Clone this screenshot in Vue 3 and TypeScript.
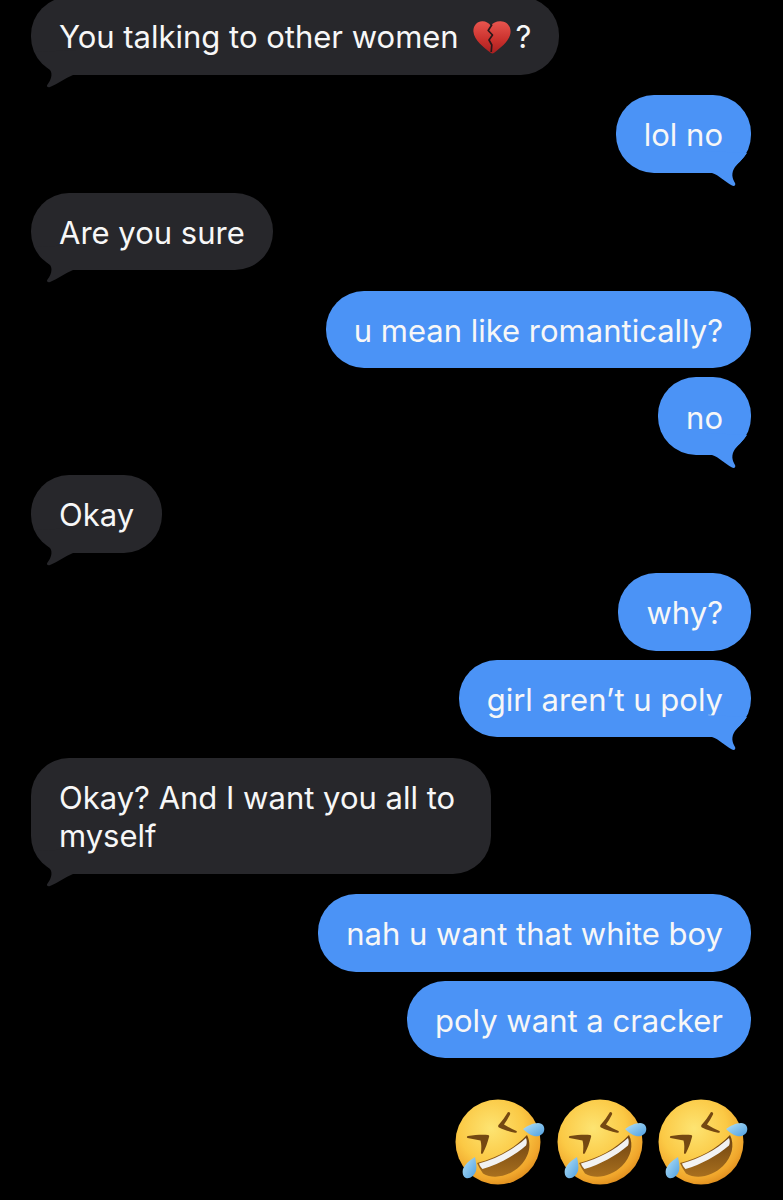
<script setup lang="ts">
interface Message {
  id: number
  text: string
  mine: boolean
  tail: boolean
  close?: boolean
  heart?: boolean
}

const messages: Message[] = [
  { id: 1, text: 'You talking to other women ', mine: false, tail: true, heart: true },
  { id: 2, text: 'lol no', mine: true, tail: true },
  { id: 3, text: 'Are you sure', mine: false, tail: true },
  { id: 4, text: 'u mean like romantically?', mine: true, tail: false },
  { id: 5, text: 'no', mine: true, tail: true, close: true },
  { id: 6, text: 'Okay', mine: false, tail: true },
  { id: 7, text: 'why?', mine: true, tail: false },
  { id: 8, text: 'girl aren’t u poly', mine: true, tail: true, close: true },
  { id: 9, text: 'Okay? And I want you all to myself', mine: false, tail: true },
  { id: 10, text: 'nah u want that white boy', mine: true, tail: false },
  { id: 11, text: 'poly want a cracker', mine: true, tail: false, close: true },
]

const emojis = [1, 2, 3]
</script>

<template>
  <div class="thread">
    <div
      v-for="m in messages"
      :key="m.id"
      class="bubble"
      :class="{ mine: m.mine, close: m.close }"
    >
      <span>{{ m.text }}</span>
      <template v-if="m.heart">
        <svg class="heart" viewBox="0 0 38 33" aria-hidden="true">
          <defs>
            <linearGradient id="heartFill" x1="0" y1="0" x2="0" y2="1">
              <stop offset="0" stop-color="#e8554e" />
              <stop offset="0.6" stop-color="#c9302c" />
              <stop offset="1" stop-color="#a81f20" />
            </linearGradient>
          </defs>
          <path
            d="M17.6 31.8C11 26.5 1 19.5.4 10.6.1 4.6 4.2.4 9.2.3c3.6-.1 6.4 1.5 8.6 4.4C20.1 2 23 .2 27.6.3c5.6.1 10 4.3 10 10.2 0 8.6-9.6 15.9-16.4 21.3-1.2 1-2.400 1-3.6 0z"
            fill="url(#heartFill)"
          />
          <path
            d="M19 3.500l-3.800 6 4.300 4.500-3.500 5 2.800 5-.6 7"
            fill="none"
            stroke="#27181a"
            stroke-width="1.700"
            stroke-linejoin="round"
          />
        </svg>
        <span>?</span>
      </template>
      <svg v-if="m.tail && m.mine" class="tail tail-right" viewBox="0 0 46 36" aria-hidden="true">
        <path d="M0 22L7 22C14 24 20 31 27 34.500C29.500 35.700 31 34 30 32C27 27 26 22 30 16C33 12 38 8 42 2L0 0Z" />
      </svg>
      <svg v-if="m.tail && !m.mine" class="tail tail-left" viewBox="0 0 46 38" aria-hidden="true">
        <path d="M4 2C8 10 14 15 19 20C22 24 20 30 16.500 34.500C15 36.500 17 38 19 37C27 34 34 28 42 25L46 25L46 0Z" />
      </svg>
    </div>

    <div class="emoji-row">
      <svg v-for="n in emojis" :key="n" class="laugh" viewBox="2 2 96 96" aria-hidden="true">
        <defs>
          <radialGradient id="faceFill" cx="0.42" cy="0.34" r="0.7">
            <stop offset="0" stop-color="#fde472" />
            <stop offset="0.55" stop-color="#fbc945" />
            <stop offset="0.85" stop-color="#f0a62c" />
            <stop offset="1" stop-color="#dd8a1c" />
          </radialGradient>
          <linearGradient id="tearFill" x1="0" y1="0" x2="1" y2="1">
            <stop offset="0" stop-color="#b5e2f7" />
            <stop offset="1" stop-color="#4f9fe0" />
          </linearGradient>
          <linearGradient id="mouthFill" x1="0" y1="0" x2="0" y2="1">
            <stop offset="0" stop-color="#6d4210" />
            <stop offset="1" stop-color="#a86f1e" />
          </linearGradient>
        </defs>
        <circle cx="48" cy="48" r="42.500" fill="url(#faceFill)" />
        <path d="M58 18C60 18 60.500 19 60 20.500C58 24.500 56 27.500 54 30.500C58 33 62 35 66.500 37C67.500 38 66.500 39 65 38.800C59 37.500 54 36 49 33.500C48 32.800 48 32 48.500 31C52 27 55 23 58 18Z" fill="#744812" />
        <path d="M18 42C25 41 32 40.500 38 41C39 41 39.500 42 39 43C37.500 49 35.500 54 33 59C32 60.500 31 60 31 58.500C31.500 54 31.500 50 30.500 46.500C26 45.800 22 45 17.500 44C16.500 43.500 16.800 42.300 18 42Z" fill="#744812" />
        <path d="M27 69C46 64 64 55 77 41C82 51 79 63 70 72C60 82 44 86 33 79.500C30.500 76 28.500 72.500 27 69Z" fill="url(#mouthFill)" />
        <path d="M29 69.500C46 65 63 56 76 44C77 47 77 49 76 51.500C64 62 48 70.500 32.500 75C30.500 73 29.700 71.500 29 69.500Z" fill="#f2f2f2" />
        <path d="M73 35C77 32 83 29 88 29C93 29 95 33 94 37C93 41 88 43 84 42C80 41 76 38 73 35Z" fill="url(#tearFill)" />
        <path d="M25 63C26 68 27 73 26 77C24 82 20 85 16 84C13 83 12 79 13 75C15 70 20 66 25 63Z" fill="url(#tearFill)" />
      </svg>
    </div>
  </div>
</template>

<style>
html,
body {
  background: #000;
}
</style>

<style scoped>
.thread {
  display: flex;
  flex-direction: column;
  align-items: flex-start;
  box-sizing: border-box;
  height: 1200px;
  overflow: hidden;
  padding: 0 32px 0 31px;
  background: #000;
  font-family: Inter, 'Liberation Sans', sans-serif;
  font-size: 31px;
  line-height: 38.5px;
  color: #f7f7f7;
}

.bubble {
  position: relative;
  box-sizing: border-box;
  max-width: 460px;
  margin-top: 20.2px;
  padding: 21.2px 28px 18px;
  border-radius: 38px;
  background: #27272b;
}

.bubble:first-child {
  margin-top: -3px;
  max-width: 540px;
}

.bubble.mine {
  align-self: flex-end;
  background: #4b93f6;
}

.bubble.close {
  margin-top: 9px;
}

.heart {
  width: 38px;
  height: 33px;
  margin: 0 4px 0 6px;
  vertical-align: -6px;
}

.tail {
  position: absolute;
  z-index: 0;
}

.tail-right {
  right: 0;
  bottom: -14px;
  width: 46px;
  height: 36px;
  fill: #4b93f6;
}

.tail-left {
  left: 0;
  bottom: -13px;
  width: 46px;
  height: 38px;
  fill: #27272b;
}

.emoji-row {
  align-self: flex-end;
  display: flex;
  gap: 5.5px;
  margin-top: 38px;
}

.laugh {
  width: 96px;
  height: 96px;
}
</style>
